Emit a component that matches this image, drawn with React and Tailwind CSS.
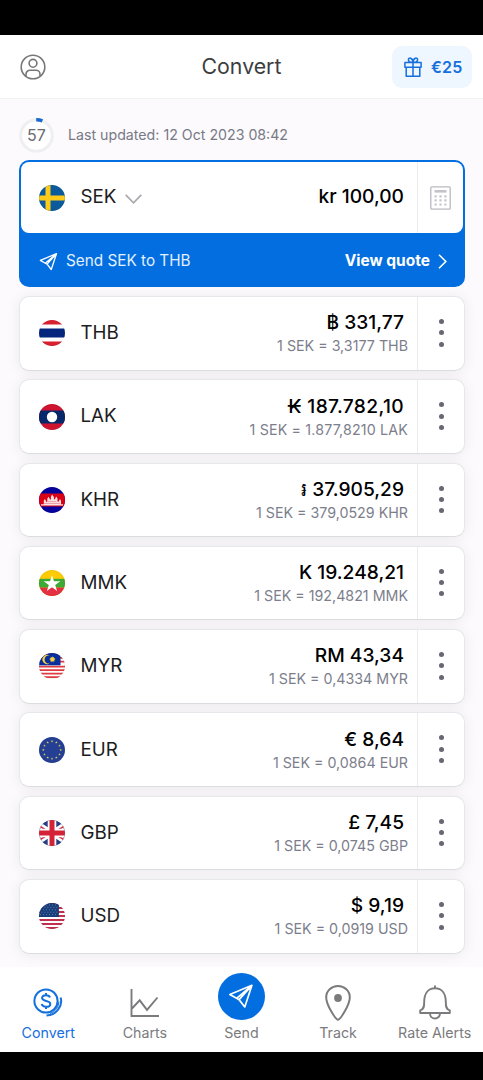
import React from "react";

const rates = [
  { code: "THB", amount: "฿ 331,77", rate: "3,3177" },
  { code: "LAK", amount: "₭ 187.782,10", rate: "1.877,8210", wide: true },
  { code: "KHR", amount: "៛ 37.905,29", rate: "379,0529" },
  { code: "MMK", amount: "K 19.248,21", rate: "192,4821" },
  { code: "MYR", amount: "RM 43,34", rate: "0,4334" },
  { code: "EUR", amount: "€ 8,64", rate: "0,0864" },
  { code: "GBP", amount: "£ 7,45", rate: "0,0745" },
  { code: "USD", amount: "$ 9,19", rate: "0,0919" },
];

const starPoints = (cx, cy, r, inner = 0.382, n = 5) =>
  Array.from({ length: n * 2 }, (_, i) => {
    const a = (Math.PI * i) / n - Math.PI / 2;
    const d = i % 2 ? r * inner : r;
    return `${(cx + d * Math.cos(a)).toFixed(2)},${(cy + d * Math.sin(a)).toFixed(2)}`;
  }).join(" ");

// every flag is drawn on a 26x26 square and clipped to a circle
const flags = {
  SEK: (
    <>
      <rect width="26" height="26" fill="#0b5a9c" />
      <path d="M9 0v26M0 13h26" stroke="#fecb1a" strokeWidth="5" />
    </>
  ),
  THB: (
    <>
      <rect width="26" height="26" fill="#fff" />
      <path d="M0 2.2h26M0 23.8h26" stroke="#d8202f" strokeWidth="4.4" />
      <path d="M0 13h26" stroke="#06267e" strokeWidth="8.8" />
    </>
  ),
  LAK: (
    <>
      <rect width="26" height="26" fill="#ce1430" />
      <path d="M0 13h26" stroke="#06286a" strokeWidth="13" />
      <circle cx="13" cy="13" r="5.2" fill="#fff" />
    </>
  ),
  KHR: (
    <>
      <rect width="26" height="26" fill="#04029a" />
      <path d="M0 13h26" stroke="#dc0016" strokeWidth="13" />
      <path d="M2 18.5h22v-1.2h-2v-3.5l-1-1.8-1 1.8v.7h-1.5v-3l-1.2-2-1.2 2v.8h-1.2V10L13 7.5 11.9 10v2.5h-1.2v-.8l-1.2-2-1.2 2v3H6.9v-.9L5.9 12l-1.1 1.8v3.5H2z" fill="#fbe1e1" />
      <path d="M5 16.5h16M8.7 14.6h8.6" stroke="#e0737c" strokeWidth=".6" />
    </>
  ),
  MMK: (
    <>
      <rect width="26" height="26" fill="#fdcb05" />
      <rect y="8.8" width="26" height="8.8" fill="#3caa34" />
      <rect y="17.6" width="26" height="8.4" fill="#e52f42" />
      <polygon points={starPoints(13, 14, 8.8)} fill="#fff" />
    </>
  ),
  MYR: (
    <>
      <rect width="26" height="26" fill="#fff" />
      <path d="M0 1.2h26M0 4.9h26M0 8.6h26M0 13.6h26M0 17.1h26M0 20.6h26M0 24.1h26" stroke="#df3b40" strokeWidth="1.9" />
      <rect width="21.5" height="12.3" fill="#0a2f9c" />
      <path d="M10.500 2.600a4.600 4.600 0 1 0 0 7.800 4 4 0 1 1 0-7.800z" fill="#f5d03c" />
      <polygon points={starPoints(13.4, 6.4, 3.2, 0.6, 11)} fill="#f5d03c" />
    </>
  ),
  EUR: (
    <>
      <rect width="26" height="26" fill="#243f94" />
      {Array.from({ length: 12 }, (_, i) => {
        const a = (Math.PI * i) / 6;
        return <polygon key={i} points={starPoints(13 + 8.7 * Math.sin(a), 13 - 8.7 * Math.cos(a), 1.4)} fill="#dcc95a" />;
      })}
    </>
  ),
  GBP: (
    <>
      <rect width="26" height="26" fill="#293f83" />
      <path d="M-4 2 30 24M-4 24 30 2" stroke="#fff" strokeWidth="5" />
      <path d="M-4 3 13 14M13 12 30 23M-4 23 13 12M13 14 30 3" stroke="#d8283a" strokeWidth="1.5" />
      <path d="M13 0v26M0 13h26" stroke="#fff" strokeWidth="8.6" />
      <path d="M13 0v26M0 13h26" stroke="#d42236" strokeWidth="5" />
    </>
  ),
  USD: (
    <>
      <rect width="26" height="26" fill="#fff" />
      <path d="M0 1h26M0 5h26M0 9h26M0 13h26M0 17h26M0 21h26M0 25h26" stroke="#c0304f" strokeWidth="2" />
      <rect width="20" height="14" fill="#173d7a" />
      {[2, 4.4, 6.8, 9.2, 11.6].map((y, i) => (
        <path key={y} d={`M${i % 2 ? 2.5 : 1} ${y}H19.5`} stroke="#8fa3c6" strokeWidth=".8" strokeDasharray=".8 2.2" />
      ))}
    </>
  ),
};

const Flag = ({ code }) => (
  <svg viewBox="0 0 26 26" className="h-[26px] w-[26px] shrink-0 overflow-hidden rounded-full">
    {flags[code]}
    <circle cx="13" cy="13" r="12.7" fill="none" stroke="#000" strokeOpacity=".1" strokeWidth=".6" />
  </svg>
);

const SendIcon = ({ className, strokeWidth = 1.6 }) => (
  <svg viewBox="0 0 20 20" fill="none" stroke="currentColor" strokeWidth={strokeWidth} strokeLinejoin="round" strokeLinecap="round" className={className}>
    <path d="M18.4 1.8 1.4 8.8l5.200 3zM18.4 1.8l-5.500 16.600-4.400-5.600zM6.600 11.800l1.900 1 4.300-5" />
  </svg>
);

const RateCard = ({ code, amount, rate, wide }) => (
  <div className="flex h-[74.6px] shrink-0 rounded-[10px] border border-[#e6e7ea] border-b-[#dcdde1] bg-white shadow-[0_1px_14px_rgba(0,0,0,0.07)]">
    <div className="flex flex-1 items-center pl-[19px]">
      <Flag code={code} />
      <span className="ml-[15.500px] text-[18.800px] text-[#1c1c1e]">{code}</span>
      <div className={`ml-auto pt-px pr-[9px] text-right ${wide ? "tracking-[0.150px]" : ""}`}>
        <p className={`pr-[4px] text-[19.200px] leading-6 whitespace-pre text-black font-[450] ${wide ? "tracking-[0.350px]" : ""}`}>{amount}</p>
        <p className="text-[14.250px] leading-[23px] text-[#7c7e8c]">1 SEK = {rate} {code}</p>
      </div>
    </div>
    <div className="flex w-[47px] flex-col items-center justify-center gap-[6.300px] border-l border-[#ececef] pb-px">
      <span className="h-[5px] w-[5px] rounded-full bg-[#666674]" />
      <span className="h-[5px] w-[5px] rounded-full bg-[#666674]" />
      <span className="h-[5px] w-[5px] rounded-full bg-[#666674]" />
    </div>
  </div>
);

const NavItem = ({ label, active, children }) => (
  <div className={`flex w-[96.600px] shrink-0 flex-col items-center justify-end ${active ? "text-[#1570dc]" : "text-[#7b7b7d]"}`}>
    {children}
    <span className="text-[14.250px] leading-5 whitespace-nowrap">{label}</span>
  </div>
);

const App = () => {
  return (
    <div className="flex h-[1080px] w-[483px] flex-col overflow-hidden bg-black font-['Inter','Noto_Sans',sans-serif]">
      <div className="h-[35px] shrink-0" />

      <header className="grid h-[64px] shrink-0 grid-cols-[1fr_auto_1fr] items-center border-b border-[#f1f0f3] bg-white px-[11px]">
        <svg viewBox="0 0 26 26" fill="none" stroke="#77777a" strokeWidth="1.6" className="ml-[9px] h-[26px] w-[26px]">
          <circle cx="13" cy="13" r="11.8" />
          <circle cx="13" cy="9.3" r="3.9" />
          <path d="M6 22.3v-2.1a4 4 0 0 1 4-4h6a4 4 0 0 1 4 4v2.1" />
        </svg>
        <h1 className="text-[21.300px] text-[#3d3d40]">Convert</h1>
        <div className="ml-auto flex h-[42px] w-[80px] items-center rounded-[10px] bg-[#eef6ff] pl-[12px] text-[#1570dc]">
          <svg viewBox="0 0 18 20" fill="none" stroke="currentColor" strokeWidth="1.5" strokeLinejoin="round" className="h-[20px] w-[18px]">
            <path d="M.9 5.4h16.2v4.8H.9zM2.2 10.2h13.6v9H2.2zM9 5.4v13.8M9 5.4C6.3 5.4 4.4 4.5 4.4 2.8c0-2.6 4.3-2.6 4.6 2.6.3-5.2 4.6-5.2 4.6-2.6C13.6 4.500 11.700 5.400 9 5.400z" />
          </svg>
          <span className="ml-[9px] text-[16px] font-semibold tracking-[0.2px]">€25</span>
        </div>
      </header>

      <main className="flex min-h-0 flex-1 flex-col overflow-hidden bg-[#fcfafd]">
        <div className="flex h-[61px] shrink-0 items-center pt-[11px] pl-[19px]">
          <div className="grid h-[35px] w-[35px] place-items-center">
            <svg viewBox="0 0 35 35" fill="#fff" className="col-start-1 row-start-1 h-[35px] w-[35px]">
              <circle cx="17.500" cy="17.500" r="15.800" stroke="#efeff2" strokeWidth="3" />
              <path d="M17.200 1.800a15.800 15.800 0 0 1 6.200 1.100" fill="none" stroke="#1b69d0" strokeWidth="3.400" />
            </svg>
            <span className="col-start-1 row-start-1 text-[16px] text-[#6a6a70]">57</span>
          </div>
          <span className="ml-[14px] text-[14.200px] text-[#777985]">Last updated: 12 Oct 2023 08:42</span>
        </div>

        <div className="flex flex-col gap-[8.730px] pr-[18px] pl-[19px]">
          <div className="h-[127.200px] shrink-0 rounded-[10px] border-2 border-[#026edf] bg-[#026edf]">
            <div className="flex h-[71px] rounded-[8px] bg-white">
              <div className="flex flex-1 items-center pl-[18px]">
                <Flag code="SEK" />
                <span className="ml-[15.500px] text-[18.800px] text-[#1c1c1e]">SEK</span>
                <svg viewBox="0 0 17 10" fill="none" stroke="#a9a9ae" strokeWidth="1.700" className="mt-[3px] ml-[9px] h-[10px] w-[17px]">
                  <path d="m.7.8 7.800 8 7.800-8" />
                </svg>
                <span className="ml-auto pr-[13px] pb-[2px] text-[19.200px] text-black font-[450]">kr 100,00</span>
              </div>
              <div className="flex w-[46px] items-center justify-center border-l border-[#ececef]">
                <svg viewBox="0 0 21 24" className="h-[24px] w-[21px]">
                  <rect x=".8" y=".8" width="19.400" height="22.400" rx="1" fill="#fff" stroke="#b9bac0" strokeWidth="1.300" />
                  <rect x="4.500" y="4" width="12" height="2.600" fill="#c3c4ca" />
                  {[9.200, 13.300, 17.400].map((y) =>
                    [4.500, 9.400, 14.300].map((x) => <rect key={`${x}-${y}`} x={x} y={y} width="2.200" height="2.200" rx=".5" fill="#c3c4ca" />)
                  )}
                </svg>
              </div>
            </div>
            <div className="flex h-[53px] items-center pt-[3px] pr-[16px] pl-[18px] text-white">
              <SendIcon className="h-[19px] w-[19px]" strokeWidth={1.400} />
              <span className="ml-[8px] text-[15.300px] text-[#e3f0ff]">Send SEK to THB</span>
              <span className="ml-auto text-[15.500px] font-bold">View quote</span>
              <svg viewBox="0 0 9 15" fill="none" stroke="currentColor" strokeWidth="1.600" className="ml-[8px] h-[15px] w-[9px]">
                <path d="m1 .8 6.800 6.700L1 14.200" />
              </svg>
            </div>
          </div>
          {rates.map((r) => (
            <RateCard key={r.code} {...r} />
          ))}
        </div>
      </main>

      <nav className="flex h-[84.500px] shrink-0 bg-white pb-[9px]">
        <NavItem label="Convert" active>
          <svg viewBox="0 0 30 30" fill="none" stroke="currentColor" className="mb-[5px] h-[30px] w-[30px]">
            <circle cx="13" cy="13" r="11.600" strokeWidth="2" />
            <path d="M27.600 9.500C30.200 17.500 23.500 27 13.500 27.600" strokeWidth="2" />
            <path d="M26 13.500A13.800 13.800 0 0 1 17 25.500" strokeWidth="1" />
            <path d="M17 9.600c-.4-1.500-1.900-2.300-4-2.300-2.300 0-3.900 1-3.900 2.800 0 4 8.200 1.600 8.200 5.800 0 1.800-1.700 2.900-4.200 2.900-2.400 0-4-1-4.400-2.700M13 5v3M13 18v3" strokeWidth="2" />
          </svg>
        </NavItem>
        <NavItem label="Charts">
          <svg viewBox="0 0 30 30" fill="none" stroke="currentColor" strokeWidth="1.900" className="mb-[5px] h-[30px] w-[30px]">
            <path d="M1.500 1v27H29M2 20.500l7.700-8.200 7.300 9.600L27.500 9.500" />
          </svg>
        </NavItem>
        <NavItem label="Send">
          <div className="mb-[3px] flex h-[47px] w-[47px] items-center justify-center rounded-full bg-[#026edf] text-white">
            <SendIcon className="h-[26px] w-[26px]" strokeWidth={1.300} />
          </div>
        </NavItem>
        <NavItem label="Track">
          <svg viewBox="0 0 26 36" fill="none" stroke="currentColor" strokeWidth="2" className="mb-[2px] h-[36px] w-[26px]">
            <path d="M13 34.800C11 34.800 1.200 20 1.200 12.400a11.800 11.400 0 0 1 23.600 0C24.800 20 15 34.800 13 34.800z" />
            <circle cx="13" cy="13" r="3.900" fill="currentColor" stroke="none" />
          </svg>
        </NavItem>
        <NavItem label="Rate Alerts">
          <svg viewBox="0 0 32 35" fill="none" stroke="currentColor" strokeWidth="1.900" strokeLinejoin="round" className="mb-[3px] h-[35px] w-[32px]">
            <path d="M16 .5v3M1.200 28v-2.600c3.600-1 4-3.800 4-8.400C5.200 8 9.500 3.300 16 3.300S26.800 8 26.800 17c0 4.600.4 7.400 4 8.400V28zM11 28.500a5 5 0 0 0 10 0" />
          </svg>
        </NavItem>
      </nav>

      <div className="h-[28.500px] shrink-0" />
    </div>
  );
};

export default App;
